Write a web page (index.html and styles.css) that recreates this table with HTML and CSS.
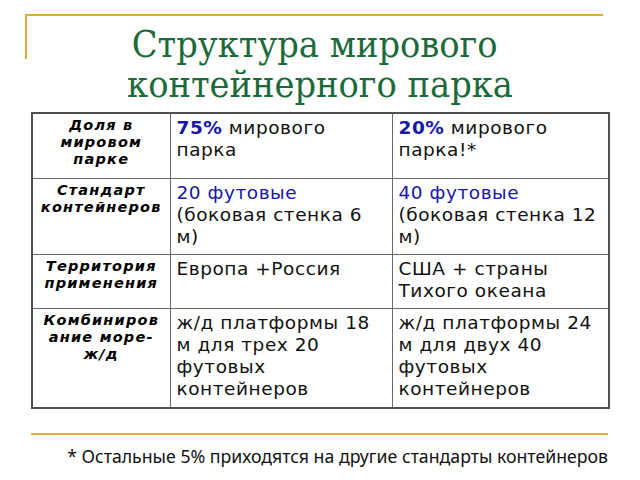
FILE: index.html
```html
<!DOCTYPE html>
<html lang="ru">
<head>
<meta charset="utf-8">
<title>Структура мирового контейнерного парка</title>
<link rel="stylesheet" href="styles.css">
</head>
<body>
<div class="slide">
  <header class="head">
    <h1 class="title">Структура мирового&nbsp;<br>контейнерного парка</h1>
  </header>
  <table class="grid">
    <colgroup>
      <col class="c1"><col class="c2"><col class="c3">
    </colgroup>
    <tr class="r1">
      <th>Доля в мировом парке</th>
      <td><b class="blue">75%</b> мирового парка</td>
      <td><b class="blue">20%</b> мирового парка!*</td>
    </tr>
    <tr class="r2">
      <th>Стандарт контейнеров</th>
      <td><span class="blue">20 футовые</span> (боковая стенка 6 м)</td>
      <td><span class="blue">40 футовые</span> (боковая стенка 12 м)</td>
    </tr>
    <tr class="r3">
      <th>Территория применения</th>
      <td>Европа +Россия</td>
      <td>США + страны Тихого океана</td>
    </tr>
    <tr class="r4">
      <th>Комбиниров ание море-<span class="nw">ж/д</span></th>
      <td>ж/д платформы 18 м для трех 20 футовых контейнеров</td>
      <td>ж/д платформы 24 м для двух 40 футовых контейнеров</td>
    </tr>
  </table>
  <footer class="foot">
    <p class="note">* Остальные 5% приходятся на другие стандарты контейнеров</p>
  </footer>
</div>
</body>
</html>
```
FILE: styles.css
```css
html, body {
  margin: 0;
  padding: 0;
  background: #ffffff;
}
.slide {
  width: 640px;
  height: 480px;
  display: flex;
  flex-direction: column;
  overflow: hidden;
}
.head {
  position: relative;
  height: 112px;
}
.head::before {
  content: "";
  position: absolute;
  left: 25px;
  top: 14px;
  width: 576px;
  height: 43px;
  border-top: 2px solid #deae2c;
  border-left: 2px solid #deae2c;
}
.title {
  margin: 0;
  padding-top: 24px;
  text-align: center;
  font-family: "DejaVu Serif", "Liberation Serif", serif;
  font-stretch: condensed;
  font-weight: normal;
  font-size: 37.5px;
  line-height: 40px;
  color: #1b6b3a;
}
.grid {
  margin-left: 31px;
  width: 577px;
  border-collapse: collapse;
  border: 2px solid #505050;
  table-layout: fixed;
  font-family: "DejaVu Sans", sans-serif;
}
.c1 { width: 138px; }
.c2 { width: 222px; }
.c3 { width: 217px; }
.grid th, .grid td {
  border: 1px solid #6a6a6a;
  vertical-align: top;
  padding: 3px 4px 0 6px;
  box-sizing: border-box;
}
.grid th {
  font-size: 14.5px;
  line-height: 17px;
  letter-spacing: 1.2px;
  font-weight: bold;
  font-style: italic;
  text-align: center;
  padding-left: 2px;
  padding-right: 2px;
  color: #000;
}
.nw { white-space: nowrap; }
.grid td {
  font-size: 18.5px;
  line-height: 22px;
  letter-spacing: 0.55px;
  color: #111;
}
.r1 { height: 65px; }
.r2 { height: 76px; }
.r3 { height: 54px; }
.r4 { height: 100px; }
.blue { color: #1717a8; }
.foot {
  margin: 24px 32px 0 31px;
  border-top: 2px solid #deae2c;
}
.note {
  margin: 10px 0 0 0;
  text-align: right;
  font-family: "Noto Sans", sans-serif;
  font-size: 17.7px;
  line-height: 22px;
  color: #111;
}
```
